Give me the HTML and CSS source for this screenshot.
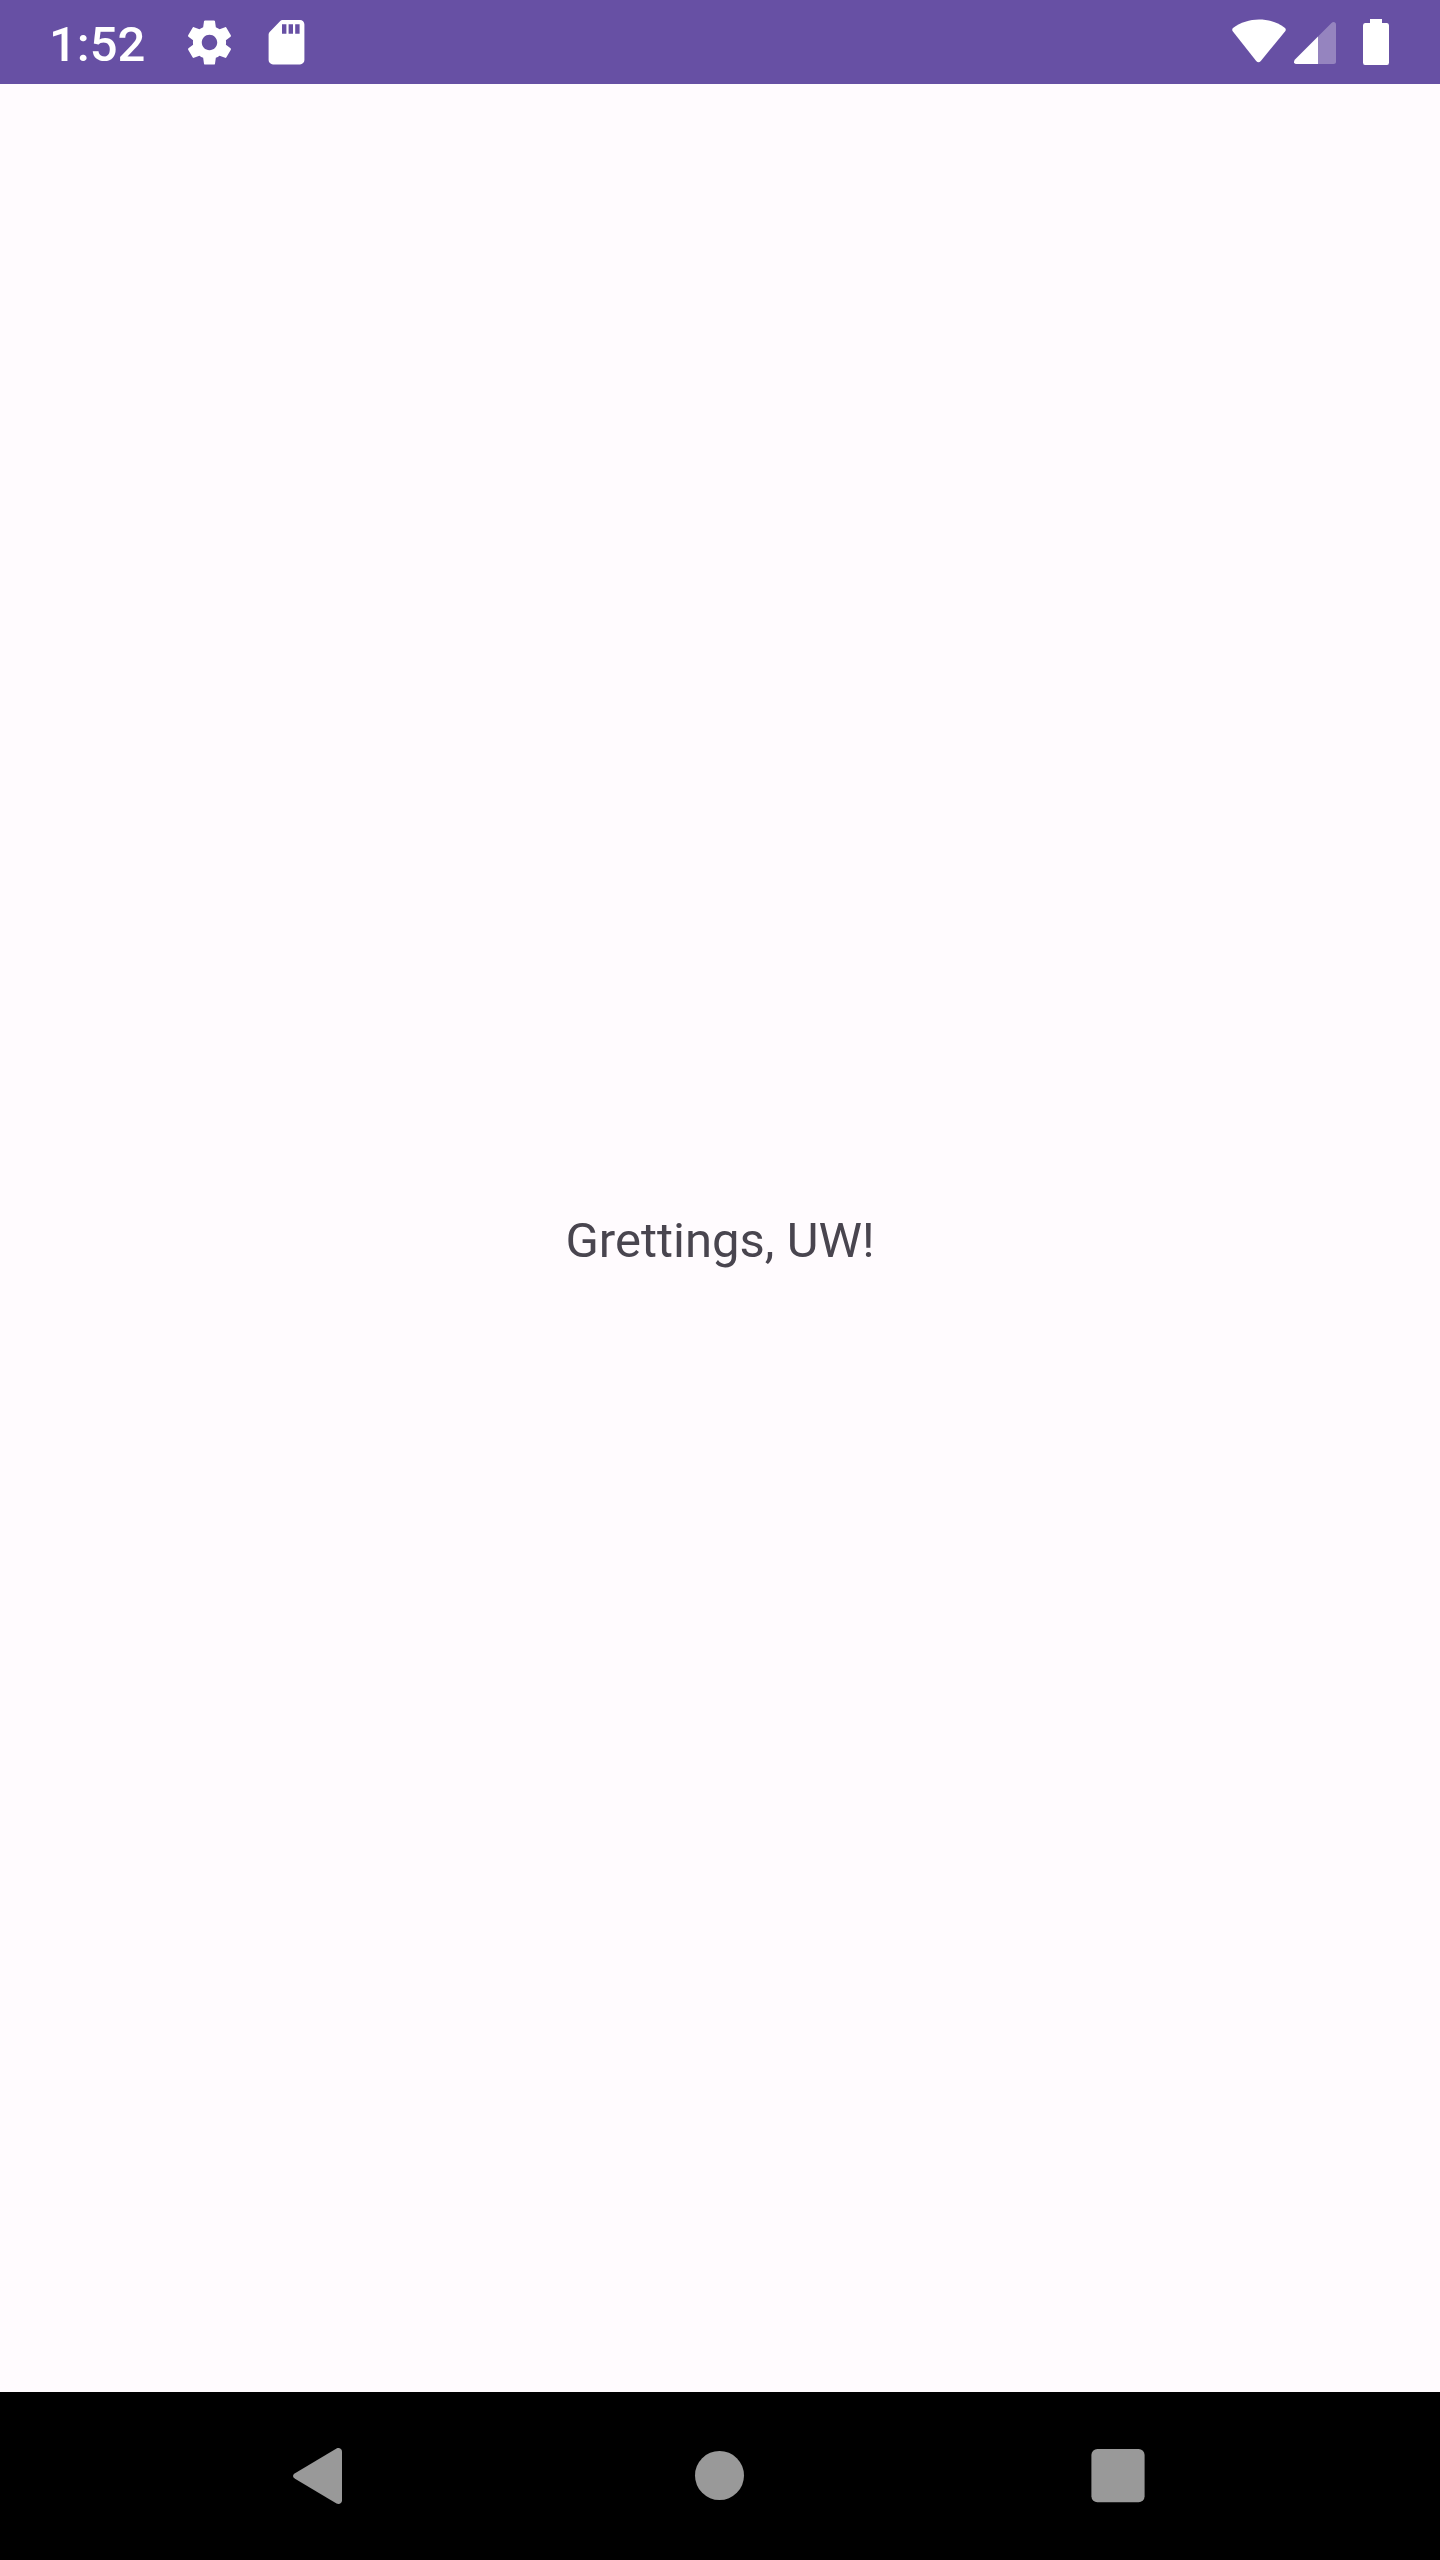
FILE: index.html
```html
<!DOCTYPE html>
<html lang="en">
<head>
<meta charset="utf-8">
<title>Greetings</title>
<link rel="stylesheet" href="styles.css">
</head>
<body>
<div class="screen">
  <header class="status-bar">
    <div class="status-left">
      <span class="clock">1:52</span>
      <svg class="gear" width="53" height="53" viewBox="0 0 24 24" fill="#fff"><path d="M19.43 12.98c.04-.32.07-.64.07-.98s-.03-.66-.07-.98l2.11-1.65c.19-.15.24-.42.12-.64l-2-3.46c-.12-.22-.39-.3-.61-.22l-2.49 1c-.52-.4-1.08-.73-1.69-.98l-.38-2.65C14.46 2.18 14.25 2 14 2h-4c-.25 0-.46.18-.49.42l-.38 2.65c-.61.25-1.17.59-1.69.98l-2.49-1c-.23-.09-.49 0-.61.22l-2 3.46c-.13.22-.07.49.12.64l2.11 1.65c-.04.32-.07.65-.07.98s.03.66.07.98l-2.11 1.65c-.19.15-.24.42-.12.64l2 3.46c.12.22.39.3.61.22l2.49-1c.52.4 1.08.73 1.69.98l.38 2.65c.03.24.24.42.49.42h4c.25 0 .46-.18.49-.42l.38-2.65c.61-.25 1.17-.59 1.69-.98l2.49 1c.23.09.49 0 .61-.22l2-3.46c.12-.22.07-.49-.12-.64l-2.11-1.65zM12 15.5c-1.93 0-3.5-1.57-3.5-3.5s1.57-3.5 3.5-3.5 3.5 1.57 3.5 3.5-1.57 3.5-3.5 3.5z"/></svg>
      <svg class="card" width="37" height="46" viewBox="0 0 37 46"><path fill="#fff" fill-rule="evenodd" d="M14.2 1H32a4.4 4.4 0 0 1 4.4 4.4V41A4.4 4.4 0 0 1 32 45.400H5A4.400 4.400 0 0 1 .6 41V15.500Q.6 14 1.600 13L12.500 1.800Q13.200 1 14.200 1ZM14 5.200V14.800H18.400V5.200ZM20.600 5.200V14.800H25V5.200ZM27.200 5.200V14.800H31.600V5.200Z"/></svg>
    </div>
    <div class="status-right">
      <svg class="wifi" width="54" height="44" viewBox="0 0 54 44" fill="#fff"><path d="M1 9C16-2.500 38-2.500 53 9Q54.500 10.500 53 12.500L28.800 42Q26.500 44.500 24.200 42L.9 12.500Q-.5 10.500 1 9Z"/></svg>
      <svg class="signal" width="42" height="42" viewBox="0 0 42 42" fill="#fff"><path fill-opacity=".3" d="M24 14.500 37.500 1Q39 -.3 40.500 .2 42 .7 42 2.500V39.500Q42 42 39.500 42H24Z"/><path d="M24 14.500V42H2.500Q.5 42 0 40.500-.3 39 1 37.500Z"/></svg>
      <svg class="battery" width="26" height="46" viewBox="0 0 26 46" fill="#fff"><path d="M7 0H19V4H24Q26 4 26 6.500V43.500Q26 46 24 46H2Q0 46 0 43.500V6.500Q0 4 2 4H7Z"/></svg>
    </div>
  </header>
  <main class="content"><p class="greeting">Grettings, UW!</p></main>
  <nav class="nav-bar">
    <svg class="back" width="49" height="56" viewBox="0 0 49 56" fill="#999"><path d="M2 25.300 43.500.5C46-.8 49 .8 49 3.500V52.500C49 55.200 46 56.800 43.500 55.500L2 30.700Q0 29.500 0 28T2 25.300Z"/></svg>
    <span class="home"></span>
    <svg class="recents" width="54" height="54" viewBox="0 0 54 54" fill="#999"><rect x=".4" width="53.200" height="53.200" rx="6"/></svg>
  </nav>
</div>
</body>
</html>
```
FILE: styles.css
```css
body {
  margin: 0;
  font-family: Roboto, sans-serif;
}

.screen {
  display: flex;
  flex-direction: column;
  height: 2560px;
  background: #fffbfe;
}

.status-bar {
  display: flex;
  justify-content: space-between;
  height: 84px;
  background: #6750a4;
}

.status-left,
.status-right {
  display: flex;
  align-items: flex-start;
}

.status-left {
  padding-left: 49px;
}

.status-right {
  padding-right: 51px;
}

.clock {
  width: 134px;
  padding-top: 16px;
  color: #fff;
  font-size: 49px;
  font-weight: 500;
  line-height: 57px;
}

.gear {
  margin-top: 16px;
}

.card {
  margin: 19px 0 0 32px;
}

.wifi {
  margin-top: 19px;
}

.signal {
  margin: 22px 27px 0 8px;
}

.battery {
  margin-top: 19px;
}

.content {
  display: flex;
  flex: 1;
  align-items: center;
  justify-content: center;
}

.greeting {
  margin: 0;
  padding-top: 5px;
  color: #49454f;
  font-size: 49px;
  line-height: 57px;
}

.nav-bar {
  display: flex;
  align-items: center;
  height: 168px;
  padding-left: 293px;
  background: #000;
}

.home {
  width: 49px;
  height: 49px;
  margin: 0 347px 1px 353px;
  border-radius: 50%;
  background: #999;
}

.recents {
  display: block;
}
```
